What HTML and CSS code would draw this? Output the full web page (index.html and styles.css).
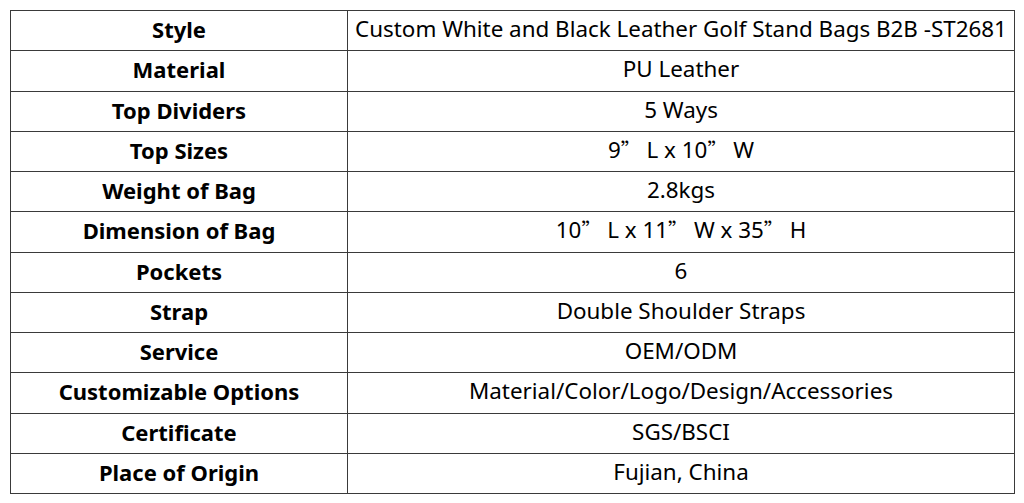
FILE: index.html
```html
<!DOCTYPE html>
<html>
<head>
<meta charset="utf-8">
<link rel="stylesheet" href="styles.css">
</head>
<body>
<table class="spec">
<tr><th>Style</th><td>Custom White and Black Leather Golf Stand Bags B2B -ST2681</td></tr>
<tr><th>Material</th><td>PU Leather</td></tr>
<tr><th>Top Dividers</th><td>5 Ways</td></tr>
<tr><th>Top Sizes</th><td>9<span class="q">”</span> L x 10<span class="q">”</span> W</td></tr>
<tr><th>Weight of Bag</th><td>2.8kgs</td></tr>
<tr><th>Dimension of Bag</th><td>10<span class="q">”</span> L x 11<span class="q">”</span> W x 35<span class="q">”</span> H</td></tr>
<tr><th>Pockets</th><td>6</td></tr>
<tr><th>Strap</th><td>Double Shoulder Straps</td></tr>
<tr><th>Service</th><td>OEM/ODM</td></tr>
<tr><th>Customizable Options</th><td>Material/Color/Logo/Design/Accessories</td></tr>
<tr><th>Certificate</th><td>SGS/BSCI</td></tr>
<tr><th>Place of Origin</th><td>Fujian, China</td></tr>
</table>
</body>
</html>
```
FILE: styles.css
```css
html, body {
  margin: 0;
  padding: 0;
  background: #fff;
}
body {
  padding: 10px 0 0 10px;
}
.spec {
  border-collapse: collapse;
  width: 1005px;
  table-layout: fixed;
  font-family: "Noto Sans", "Noto Sans CJK SC", sans-serif;
  font-size: 22px;
  color: #000;
}
.spec th, .spec td {
  border: 1px solid #3a3a3a;
  height: 36.25px;
  padding: 0 0 3px 0;
  text-align: center;
  vertical-align: middle;
  line-height: 26px;
}
.spec th {
  width: 336px;
  font-weight: 700;
}
.spec td {
  font-weight: 400;
  font-size: 22.4px;
}
.q {
  font-family: "Noto Sans CJK SC", sans-serif;
  font-size: 20px;
}
```
